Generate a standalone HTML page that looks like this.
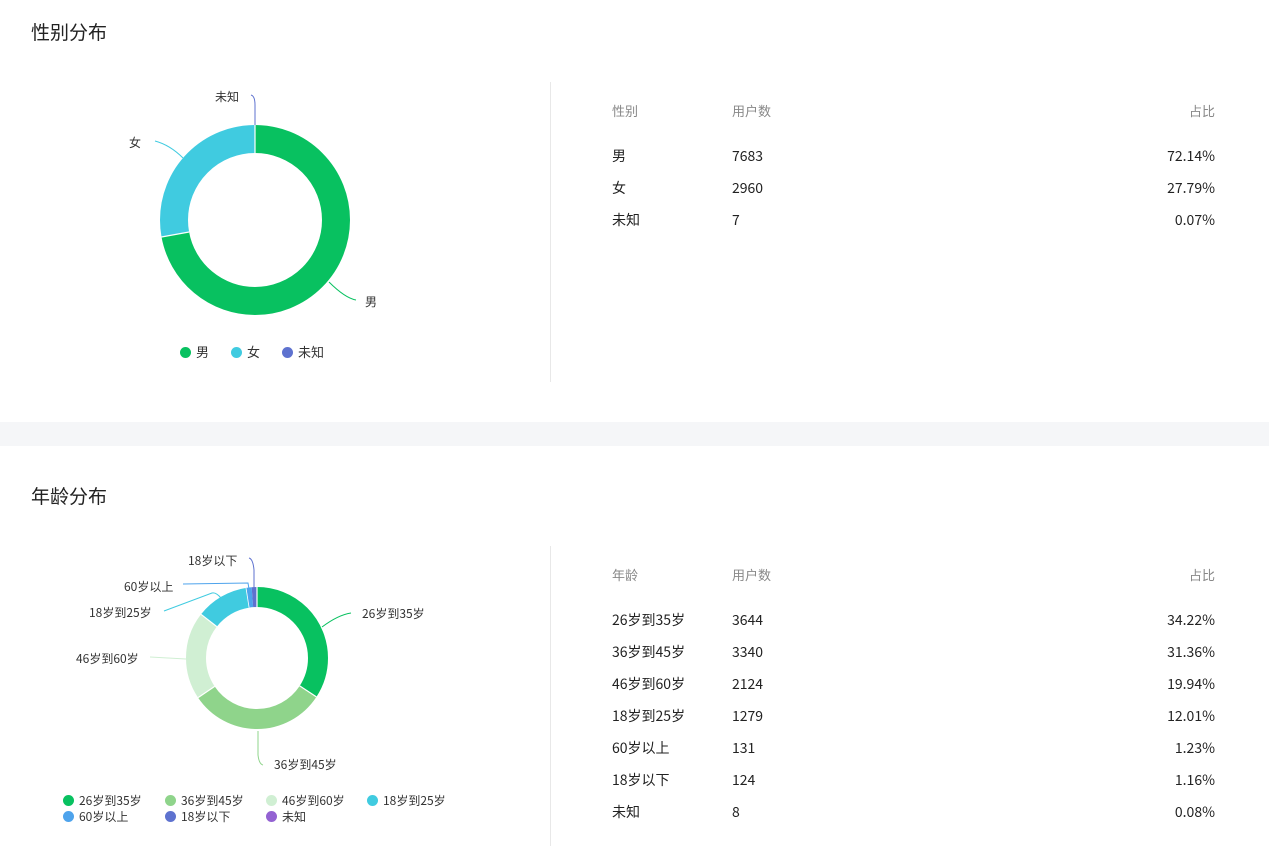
<!DOCTYPE html>
<html><head><meta charset="utf-8"><style>
body{margin:0;width:1269px;height:864px;background:#fff;font-family:"Noto Sans CJK SC","Liberation Sans",sans-serif;position:relative;overflow:hidden;color:#222}
.a{position:absolute;white-space:nowrap}
.t{font-size:19px;color:#222;line-height:24px}
.h{font-size:13px;color:#888;line-height:20px}
.r{font-size:14px;color:#222;line-height:20px}
.rt{text-align:right;width:200px}
.l{font-size:12px;color:#333;line-height:16px}
.dot{display:inline-block;width:11px;height:11px;border-radius:50%;vertical-align:-1px;margin-right:5px}
</style></head><body>
<div class="a t" style="left:31px;top:20px">性别分布</div>
<div class="a" style="left:550px;top:82px;width:1px;height:300px;background:#e8e8e8"></div>
<div class="a" style="left:0;top:422px;width:1269px;height:24px;background:#f5f6f8"></div>
<div class="a t" style="left:31px;top:484px">年龄分布</div>
<div class="a" style="left:550px;top:546px;width:1px;height:300px;background:#e8e8e8"></div>

<svg class="a" style="left:0;top:0" width="550" height="864">
<g transform="rotate(-90 255 220)" fill="none" stroke-width="28">
<circle cx="255" cy="220" r="81" stroke="#08c160" stroke-dasharray="367.1 600"/>
<circle cx="255" cy="220" r="81" stroke="#40cbe0" stroke-dasharray="141.4 600" stroke-dashoffset="-367.1"/>
<circle cx="255" cy="220" r="81" stroke="#5e72cf" stroke-dasharray="0.6 600" stroke-dashoffset="-508.4"/>
</g>
<line x1="255" y1="125" x2="255" y2="153" stroke="#fff" stroke-width="1.2"/>
<line x1="161.5" y1="237" x2="189.1" y2="232" stroke="#fff" stroke-width="1.2"/>
<path d="M183 158 Q170 145 155 141" stroke="#40cbe0" fill="none"/>
<path d="M255 125 L255 105 Q255 96 251 95" stroke="#5e72cf" fill="none"/>
<path d="M329 282 Q345 298 356 300" stroke="#08c160" fill="none"/>
<g transform="rotate(-90 257 658)" fill="none" stroke-width="20">
<circle cx="257" cy="658" r="61" stroke="#08c160" stroke-dasharray="131.2 600"/>
<circle cx="257" cy="658" r="61" stroke="#8fd48b" stroke-dasharray="120.2 600" stroke-dashoffset="-131.2"/>
<circle cx="257" cy="658" r="61" stroke="#d0efd3" stroke-dasharray="76.4 600" stroke-dashoffset="-251.4"/>
<circle cx="257" cy="658" r="61" stroke="#40cbe0" stroke-dasharray="46 600" stroke-dashoffset="-327.8"/>
<circle cx="257" cy="658" r="61" stroke="#4ea3ec" stroke-dasharray="4.7 600" stroke-dashoffset="-373.8"/>
<circle cx="257" cy="658" r="61" stroke="#5e72cf" stroke-dasharray="4.4 600" stroke-dashoffset="-378.5"/>
<circle cx="257" cy="658" r="61" stroke="#9362d2" stroke-dasharray="0.6 600" stroke-dashoffset="-382.9"/>
</g>
<g stroke="#fff" stroke-width="1.2">
<line x1="257" y1="586" x2="257" y2="608"/>
<line x1="299.7" y1="685.9" x2="316.4" y2="696.9"/>
<line x1="214.7" y1="686.4" x2="198.1" y2="697.6"/>
<line x1="216.8" y1="626.6" x2="201" y2="614.3"/>
<line x1="249.1" y1="607.6" x2="246" y2="587.9" stroke-width="0.8"/>
</g>
<path d="M322 627 Q338 615 351 613" stroke="#08c160" fill="none"/>
<path d="M258 731 L258 755 Q259 764 263 765" stroke="#8fd48b" fill="none"/>
<path d="M186 659 L150 657" stroke="#d0efd3" fill="none"/>
<path d="M221 598 Q216 592 212 593 L164 611" stroke="#40cbe0" fill="none"/>
<path d="M249 589 L248 583 L183 584" stroke="#4ea3ec" fill="none"/>
<path d="M254 588 L254 570 Q253 559 249 558" stroke="#5e72cf" fill="none"/>
</svg>

<div class="a l" style="left:215px;top:89px">未知</div>
<div class="a l" style="left:129px;top:135px">女</div>
<div class="a l" style="left:365px;top:294px">男</div>
<div class="a" style="left:180px;top:343px;font-size:13px;color:#333;line-height:18px"><span class="dot" style="background:#08c160"></span>男<span style="display:inline-block;width:22px"></span><span class="dot" style="background:#40cbe0"></span>女<span style="display:inline-block;width:22px"></span><span class="dot" style="background:#5e72cf"></span>未知</div>

<div class="a l" style="left:188px;top:553px">18岁以下</div>
<div class="a l" style="left:124px;top:579px">60岁以上</div>
<div class="a l" style="left:89px;top:605px">18岁到25岁</div>
<div class="a l" style="left:76px;top:651px">46岁到60岁</div>
<div class="a l" style="left:362px;top:606px">26岁到35岁</div>
<div class="a l" style="left:274px;top:757px">36岁到45岁</div>

<div class="a l" style="left:63px;top:793px"><span class="dot" style="background:#08c160"></span>26岁到35岁</div>
<div class="a l" style="left:165px;top:793px"><span class="dot" style="background:#8fd48b"></span>36岁到45岁</div>
<div class="a l" style="left:266px;top:793px"><span class="dot" style="background:#d0efd3"></span>46岁到60岁</div>
<div class="a l" style="left:367px;top:793px"><span class="dot" style="background:#40cbe0"></span>18岁到25岁</div>
<div class="a l" style="left:63px;top:809px"><span class="dot" style="background:#4ea3ec"></span>60岁以上</div>
<div class="a l" style="left:165px;top:809px"><span class="dot" style="background:#5e72cf"></span>18岁以下</div>
<div class="a l" style="left:266px;top:809px"><span class="dot" style="background:#9362d2"></span>未知</div>

<div class="a h" style="left:612px;top:101px">性别</div>
<div class="a h" style="left:732px;top:101px">用户数</div>
<div class="a h rt" style="left:1015px;top:101px">占比</div>
<div class="a r" style="left:612px;top:146px">男</div><div class="a r" style="left:732px;top:146px">7683</div><div class="a r rt" style="left:1015px;top:146px">72.14%</div>
<div class="a r" style="left:612px;top:178px">女</div><div class="a r" style="left:732px;top:178px">2960</div><div class="a r rt" style="left:1015px;top:178px">27.79%</div>
<div class="a r" style="left:612px;top:210px">未知</div><div class="a r" style="left:732px;top:210px">7</div><div class="a r rt" style="left:1015px;top:210px">0.07%</div>

<div class="a h" style="left:612px;top:565px">年龄</div>
<div class="a h" style="left:732px;top:565px">用户数</div>
<div class="a h rt" style="left:1015px;top:565px">占比</div>
<div class="a r" style="left:612px;top:610px">26岁到35岁</div><div class="a r" style="left:732px;top:610px">3644</div><div class="a r rt" style="left:1015px;top:610px">34.22%</div>
<div class="a r" style="left:612px;top:642px">36岁到45岁</div><div class="a r" style="left:732px;top:642px">3340</div><div class="a r rt" style="left:1015px;top:642px">31.36%</div>
<div class="a r" style="left:612px;top:674px">46岁到60岁</div><div class="a r" style="left:732px;top:674px">2124</div><div class="a r rt" style="left:1015px;top:674px">19.94%</div>
<div class="a r" style="left:612px;top:706px">18岁到25岁</div><div class="a r" style="left:732px;top:706px">1279</div><div class="a r rt" style="left:1015px;top:706px">12.01%</div>
<div class="a r" style="left:612px;top:738px">60岁以上</div><div class="a r" style="left:732px;top:738px">131</div><div class="a r rt" style="left:1015px;top:738px">1.23%</div>
<div class="a r" style="left:612px;top:770px">18岁以下</div><div class="a r" style="left:732px;top:770px">124</div><div class="a r rt" style="left:1015px;top:770px">1.16%</div>
<div class="a r" style="left:612px;top:802px">未知</div><div class="a r" style="left:732px;top:802px">8</div><div class="a r rt" style="left:1015px;top:802px">0.08%</div>
</body></html>
